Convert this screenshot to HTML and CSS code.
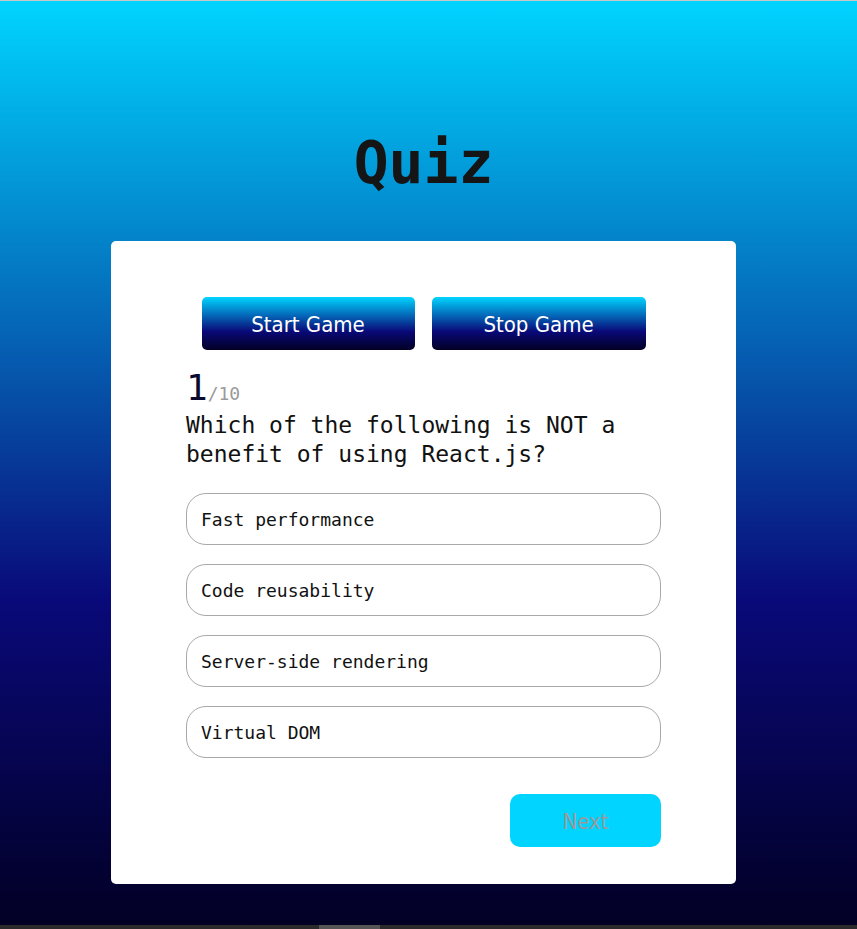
FILE: index.html
```html
<!DOCTYPE html>
<html lang="en">
<head>
<meta charset="utf-8">
<title>Quiz</title>
<link rel="stylesheet" href="styles.css">
</head>
<body>
<main class="page">
  <h1 class="title">Quiz</h1>
  <section class="card">
    <div class="controls">
      <button class="btn-game">Start Game</button>
      <button class="btn-game btn-stop">Stop Game</button>
    </div>
    <div class="progress"><span class="current">1</span><span class="total">/10</span></div>
    <p class="question">Which of the following is NOT a benefit of using React.js?</p>
    <ul class="options">
      <li class="option">Fast performance</li>
      <li class="option">Code reusability</li>
      <li class="option">Server-side rendering</li>
      <li class="option">Virtual DOM</li>
    </ul>
    <div class="footer">
      <button class="btn-next" disabled>Next</button>
    </div>
  </section>
</main>
<div class="hscroll"><div class="thumb"></div></div>
</body>
</html>
```

FILE: styles.css
```css
* { box-sizing: border-box; }

html, body { margin: 0; padding: 0; }

body {
  min-height: 100vh;
  display: flex;
  flex-direction: column;
  border-top: 1px solid #c8c8c8;
  background: #020024;
  font-family: "DejaVu Sans Mono", monospace;
}

.page {
  flex: 1;
  padding: 127px 10px 0 0;
  background: linear-gradient(0deg, #020024 0%, #090979 35%, #00d4ff 100%);
}

.title {
  margin: 0 0 43px;
  text-align: center;
  font-size: 58px;
  line-height: 70px;
  font-weight: bold;
  color: #151515;
}

.card {
  width: 625px;
  margin: 0 auto 41px;
  background: #fff;
  border-radius: 5px;
  padding: 56px 75px 37px;
}

.controls {
  display: flex;
  justify-content: center;
  gap: 17px;
}

.btn-game {
  width: 213px;
  height: 53px;
  border: none;
  border-radius: 5px;
  background: linear-gradient(0deg, #020024 0%, #090979 35%, #00d4ff 100%);
  color: #fff;
  font-family: "DejaVu Sans", sans-serif;
  font-stretch: condensed;
  font-size: 22px;
  padding: 2px 0 0;
}

.btn-stop { width: 214px; }

.progress {
  margin-top: 17px;
  line-height: 42px;
  height: 42px;
}

.current {
  font-size: 36px;
  color: #0b0a2e;
}

.total {
  font-size: 18px;
  color: #9a9a9a;
}

.question {
  margin: 2px 0 0;
  font-size: 23px;
  line-height: 29px;
  color: #111;
}

.options {
  list-style: none;
  margin: 24px 0 0;
  padding: 0;
  display: flex;
  flex-direction: column;
  gap: 19px;
}

.option {
  height: 52px;
  display: flex;
  align-items: center;
  padding-left: 14px;
  border: 1px solid #a8a8a8;
  border-radius: 20px;
  font-size: 18px;
  color: #111;
}

.footer {
  display: flex;
  justify-content: flex-end;
  margin-top: 36px;
}

.btn-next {
  width: 151px;
  height: 53px;
  border: none;
  border-radius: 10px;
  background: #00d4ff;
  color: #9a9a9a;
  font-family: "DejaVu Sans", sans-serif;
  font-stretch: condensed;
  font-size: 22px;
  padding: 2px 0 0;
}

.hscroll {
  height: 4px;
  background: #2b2b2b;
  position: relative;
}

.hscroll .thumb {
  position: absolute;
  left: 319px;
  top: 0;
  width: 61px;
  height: 4px;
  background: #555;
}
```
